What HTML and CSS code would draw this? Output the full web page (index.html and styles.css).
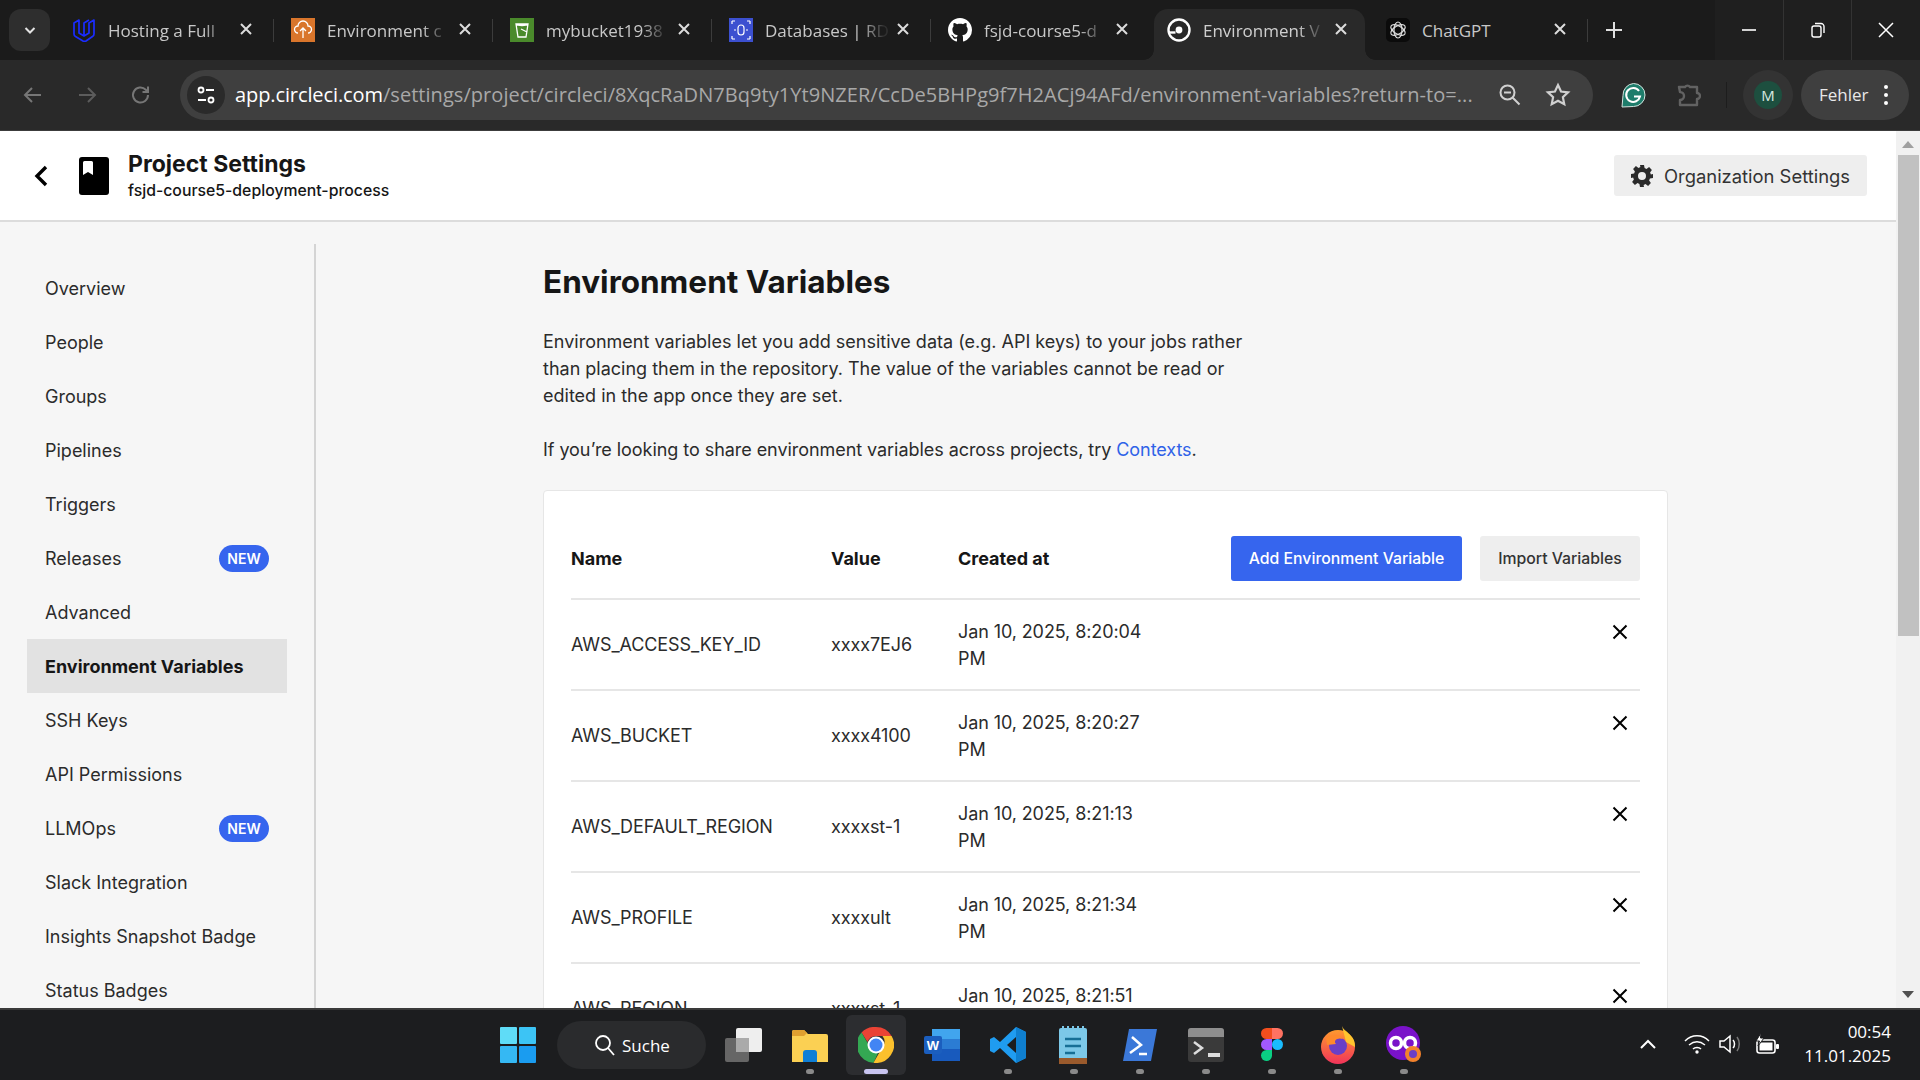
FILE: index.html
```html
<!DOCTYPE html>
<html lang="en">
<head>
    <meta charset="UTF-8">
    <title>Environment Variables</title>
    <link rel="stylesheet" href="styles.css">
</head>
<body>
    <div class="tabstrip">
        <div class="tab-search"><svg width="14" height="14" viewBox="0 0 14 14"><path d="M2.500 5 7 9.500 11.500 5" fill="none" stroke="#e3e3e3" stroke-width="2"/></svg></div>
        <div class="tabs">
            <div class="tab">
                <svg class="favicon" viewBox="0 0 24 24"><path d="M7 2 2 5v11c0 1 .5 2 1.500 2.500L11 23c1 .5 2 .5 3 0l6.500-4.500c1-.5 1.500-1.500 1.500-2.500V2l-5 3v10l-5 3-5-3zM12 18V5l5-3" fill="none" stroke="#1a2cff" stroke-width="1.700" stroke-linejoin="round"/></svg>
                <span class="tab-title">Hosting a Full</span>
                <svg class="tab-close" viewBox="0 0 12 12"><path d="M1 1l10 10M11 1 1 11" stroke="#dcdcdc" stroke-width="2"/></svg>
            </div>
            <div class="tab">
                <svg class="favicon" viewBox="0 0 24 24"><rect width="24" height="24" fill="#d9752b"/><path d="M7 15a3.500 3.500 0 0 1 0-7 5 5 0 0 1 10 0 3.500 3.500 0 0 1 0 7M12 20v-9M9 13l3-3 3 3" fill="none" stroke="#fff" stroke-width="1.300"/></svg>
                <span class="tab-title">Environment c</span>
                <svg class="tab-close" viewBox="0 0 12 12"><path d="M1 1l10 10M11 1 1 11" stroke="#dcdcdc" stroke-width="2"/></svg>
            </div>
            <div class="tab">
                <svg class="favicon" viewBox="0 0 24 24"><rect width="24" height="24" fill="#4a8a2b"/><path d="M6 6h12l-2 13H8zM6 6c2 2 10 2 12 0M11 11l6 3" fill="none" stroke="#fff" stroke-width="1.300"/></svg>
                <span class="tab-title">mybucket1938</span>
                <svg class="tab-close" viewBox="0 0 12 12"><path d="M1 1l10 10M11 1 1 11" stroke="#dcdcdc" stroke-width="2"/></svg>
            </div>
            <div class="tab">
                <svg class="favicon" viewBox="0 0 24 24"><rect width="24" height="24" fill="#3c50d0"/><rect x="9" y="7" width="6" height="10" rx="3" fill="none" stroke="#fff" stroke-width="1.200"/><path d="M3 3h3M3 3v3M21 3h-3M21 3v3M3 21h3M3 21v-3M21 21h-3M21 21v-3M5 12h2M17 12h2" stroke="#fff" stroke-width="1.200"/></svg>
                <span class="tab-title">Databases | RD</span>
                <svg class="tab-close" viewBox="0 0 12 12"><path d="M1 1l10 10M11 1 1 11" stroke="#dcdcdc" stroke-width="2"/></svg>
            </div>
            <div class="tab">
                <svg class="favicon" viewBox="0 0 16 16"><path fill="#fff" d="M8 0C3.580 0 0 3.580 0 8c0 3.540 2.290 6.530 5.470 7.590.4.070.55-.17.55-.38 0-.19-.01-.82-.01-1.490-2.010.37-2.530-.49-2.690-.94-.09-.23-.48-.94-.82-1.130-.28-.15-.68-.52-.01-.53.63-.01 1.080.58 1.230.82.720 1.210 1.870.870 2.330.660.070-.520.280-.870.510-1.070-1.780-.2-3.640-.890-3.640-3.950 0-.870.310-1.590.820-2.150-.080-.2-.360-1.020.080-2.120 0 0 .670-.210 2.200.820.640-.180 1.320-.270 2-.270s1.360.090 2 .270c1.530-1.040 2.200-.820 2.200-.820.440 1.100.160 1.920.080 2.120.510.560.820 1.270.820 2.150 0 3.070-1.870 3.750-3.650 3.950.290.250.540.730.540 1.480 0 1.070-.010 1.930-.010 2.200 0 .210.150.460.550.380A8.010 8.010 0 0 0 16 8c0-4.420-3.580-8-8-8z"/></svg>
                <span class="tab-title">fsjd-course5-d</span>
                <svg class="tab-close" viewBox="0 0 12 12"><path d="M1 1l10 10M11 1 1 11" stroke="#dcdcdc" stroke-width="2"/></svg>
            </div>
            <div class="tab tab-active">
                <svg class="favicon" viewBox="0 0 24 24"><circle cx="12" cy="12" r="10.500" fill="none" stroke="#fff" stroke-width="2.400"/><circle cx="12" cy="12" r="3.400" fill="#fff"/><path d="M1.500 14.500h7" stroke="#fff" stroke-width="2.400"/></svg>
                <span class="tab-title">Environment V</span>
                <svg class="tab-close" viewBox="0 0 12 12"><path d="M1 1l10 10M11 1 1 11" stroke="#dcdcdc" stroke-width="2"/></svg>
            </div>
            <div class="tab tab-last">
                <svg class="favicon" viewBox="0 0 24 24"><rect width="24" height="24" rx="5" fill="#0b0b0b"/><g fill="none" stroke="#ddd" stroke-width="1.200"><ellipse cx="12" cy="12" rx="4" ry="8"/><ellipse cx="12" cy="12" rx="4" ry="8" transform="rotate(60 12 12)"/><ellipse cx="12" cy="12" rx="4" ry="8" transform="rotate(120 12 12)"/></g></svg>
                <span class="tab-title">ChatGPT</span>
                <svg class="tab-close" viewBox="0 0 12 12"><path d="M1 1l10 10M11 1 1 11" stroke="#dcdcdc" stroke-width="2"/></svg>
            </div>
        </div>
        <div class="tab-new"><svg width="18" height="18" viewBox="0 0 18 18"><path d="M9 1v16M1 9h16" stroke="#e0e0e0" stroke-width="2"/></svg></div>
        <div class="window-controls">
            <div class="win-btn"><svg width="14" height="14" viewBox="0 0 14 14"><path d="M0 7h14" stroke="#fff" stroke-width="1.600"/></svg></div>
            <div class="win-btn"><svg width="16" height="16" viewBox="0 0 16 16"><rect x="2" y="4" width="9" height="11" rx="2" fill="none" stroke="#fff" stroke-width="1.400"/><path d="M5 1.500h6a3 3 0 0 1 3 3V11" fill="none" stroke="#fff" stroke-width="1.400"/></svg></div>
            <div class="win-btn"><svg width="16" height="16" viewBox="0 0 16 16"><path d="M1 1l14 14M15 1 1 15" stroke="#fff" stroke-width="1.500"/></svg></div>
        </div>
    </div>

    <div class="toolbar">
        <div class="nav-icons">
            <svg width="24" height="24" viewBox="0 0 24 24"><path d="M20 12H5M11 5l-7 7 7 7" fill="none" stroke="#767676" stroke-width="2"/></svg>
            <svg width="24" height="24" viewBox="0 0 24 24"><path d="M4 12h15M13 5l7 7-7 7" fill="none" stroke="#5c5c5c" stroke-width="2"/></svg>
            <svg width="24" height="24" viewBox="0 0 24 24"><path d="M19 12a7.500 7.500 0 1 1-2.200-5.300L19 9M19 3.500V9h-5.500" fill="none" stroke="#767676" stroke-width="2"/></svg>
        </div>
        <div class="omnibox">
            <div class="site-info"><svg width="22" height="22" viewBox="0 0 22 22"><circle cx="6" cy="6" r="2.500" fill="none" stroke="#fff" stroke-width="1.800"/><path d="M11 6h8M3 16h8" stroke="#fff" stroke-width="1.800"/><circle cx="16" cy="16" r="2.500" fill="none" stroke="#fff" stroke-width="1.800"/></svg></div>
            <div class="url"><span class="url-host">app.circleci.com</span>/settings/project/circleci/8XqcRaDN7Bq9ty1Yt9NZER/CcDe5BHPg9f7H2ACj94AFd/environment-variables?return-to=...</div>
            <svg class="omni-zoom" width="26" height="26" viewBox="0 0 26 26"><circle cx="10.500" cy="10.500" r="7" fill="none" stroke="#d0d0d0" stroke-width="2"/><path d="M7 10.500h7M15.500 15.500l7 7" stroke="#d0d0d0" stroke-width="2"/></svg>
            <svg width="26" height="26" viewBox="0 0 24 24"><path d="m12 2.800 2.800 6 6.500.8-4.800 4.400 1.300 6.500-5.800-3.200-5.800 3.200 1.300-6.500-4.800-4.400 6.500-.8z" fill="none" stroke="#d0d0d0" stroke-width="2"/></svg>
        </div>
        <div class="ext-icons">
            <svg width="26" height="26" viewBox="0 0 26 26"><path d="M13.500 1.500a11.500 11.500 0 1 1 0 23L2 25l1-11.500A11.500 11.500 0 0 1 13.500 1.500z" fill="#1e7d6b" stroke="#d5e5e0" stroke-width="1"/><path d="M19 9a7 7 0 1 0 1 5.500h-6" fill="none" stroke="#fff" stroke-width="2"/></svg>
            <svg width="26" height="26" viewBox="0 0 26 26"><path d="M4 5h6a3 3 0 0 1 5 0h7v6a3 3 0 0 1 0 6v6H5v-5a4 4 0 0 0 0-8z" fill="none" stroke="#626262" stroke-width="2.400" stroke-linejoin="round"/></svg>
        </div>
        <div class="toolbar-sep"></div>
        <div class="avatar-ring"><div class="avatar">M</div></div>
        <div class="error-pill">Fehler<span class="dots"><i></i><i></i><i></i></span></div>
    </div>

    <div class="viewport">
        <div class="page">
            <header class="top">
                <svg class="back" width="16" height="24" viewBox="0 0 16 24"><path d="M13 3 4 12l9 9" fill="none" stroke="#000" stroke-width="3.400"/></svg>
                <svg class="book" width="30" height="38" viewBox="0 0 30 38"><rect width="30" height="38" rx="3" fill="#000"/><path d="M4 5.500a1.500 1.500 0 0 1 1.500-1.500h7a1.500 1.500 0 0 1 1.500 1.500V18l-5-3-5 3z" fill="#fff"/></svg>
                <div class="top-titles">
                    <div class="top-title">Project Settings</div>
                    <div class="top-sub">fsjd-course5-deployment-process</div>
                </div>
                <div class="org-btn">
                    <svg width="24" height="24" viewBox="0 0 24 24"><path fill="#2b2b2b" fill-rule="evenodd" d="M10 1h4l.6 3.100 1.900.8 2.600-1.800 2.800 2.800-1.800 2.600.8 1.900L23 10v4l-3.100.6-.8 1.900 1.800 2.600-2.800 2.800-2.600-1.800-1.900.8L14 23h-4l-.6-3.100-1.900-.8-2.600 1.800-2.800-2.800 1.800-2.600-.8-1.900L1 14v-4l3.100-.6.8-1.900-1.800-2.600 2.800-2.800 2.600 1.800 1.900-.8zM12 8a4 4 0 1 0 0 8 4 4 0 0 0 0-8z"/></svg>
                    Organization Settings
                </div>
            </header>
            <div class="content">
                <nav class="sidebar">
                    <a class="nav-item">Overview</a>
                    <a class="nav-item">People</a>
                    <a class="nav-item">Groups</a>
                    <a class="nav-item">Pipelines</a>
                    <a class="nav-item">Triggers</a>
                    <a class="nav-item">Releases<span class="badge">NEW</span></a>
                    <a class="nav-item">Advanced</a>
                    <a class="nav-item nav-active">Environment Variables</a>
                    <a class="nav-item">SSH Keys</a>
                    <a class="nav-item">API Permissions</a>
                    <a class="nav-item">LLMOps<span class="badge">NEW</span></a>
                    <a class="nav-item">Slack Integration</a>
                    <a class="nav-item">Insights Snapshot Badge</a>
                    <a class="nav-item">Status Badges</a>
                </nav>
                <main class="main">
                    <h1>Environment Variables</h1>
                    <p class="intro">Environment variables let you add sensitive data (e.g. API keys) to your jobs rather than placing them in the repository. The value of the variables cannot be read or edited in the app once they are set.</p>
                    <p class="intro intro-share">If you’re looking to share environment variables across projects, try <a class="link">Contexts</a>.</p>
                    <section class="card">
                        <div class="row row-head">
                            <div>Name</div>
                            <div>Value</div>
                            <div>Created at</div>
                            <div class="actions">
                                <button class="btn btn-primary">Add Environment Variable</button>
                                <button class="btn">Import Variables</button>
                            </div>
                        </div>
                        <div class="row">
                            <div>AWS_ACCESS_KEY_ID</div><div>xxxx7EJ6</div><div>Jan 10, 2025, 8:20:04 PM</div>
                            <svg class="del" width="16" height="16" viewBox="0 0 16 16"><path d="M1.500 1.500l13 13M14.500 1.500l-13 13" stroke="#000" stroke-width="2"/></svg>
                        </div>
                        <div class="row">
                            <div>AWS_BUCKET</div><div>xxxx4100</div><div>Jan 10, 2025, 8:20:27 PM</div>
                            <svg class="del" width="16" height="16" viewBox="0 0 16 16"><path d="M1.500 1.500l13 13M14.500 1.500l-13 13" stroke="#000" stroke-width="2"/></svg>
                        </div>
                        <div class="row">
                            <div>AWS_DEFAULT_REGION</div><div>xxxxst-1</div><div>Jan 10, 2025, 8:21:13 PM</div>
                            <svg class="del" width="16" height="16" viewBox="0 0 16 16"><path d="M1.500 1.500l13 13M14.500 1.500l-13 13" stroke="#000" stroke-width="2"/></svg>
                        </div>
                        <div class="row">
                            <div>AWS_PROFILE</div><div>xxxxult</div><div>Jan 10, 2025, 8:21:34 PM</div>
                            <svg class="del" width="16" height="16" viewBox="0 0 16 16"><path d="M1.500 1.500l13 13M14.500 1.500l-13 13" stroke="#000" stroke-width="2"/></svg>
                        </div>
                        <div class="row">
                            <div>AWS_REGION</div><div>xxxxst-1</div><div>Jan 10, 2025, 8:21:51 PM</div>
                            <svg class="del" width="16" height="16" viewBox="0 0 16 16"><path d="M1.500 1.500l13 13M14.500 1.500l-13 13" stroke="#000" stroke-width="2"/></svg>
                        </div>
                    </section>
                </main>
            </div>
        </div>
        <div class="scrollbar">
            <div class="arrow-up"></div>
            <div class="thumb"></div>
            <div class="arrow-down"></div>
        </div>
    </div>

    <footer class="taskbar">
        <div class="task-center">
            <div class="task-icon">
                <svg width="36" height="36" viewBox="0 0 36 36"><rect width="17" height="17" rx="1" fill="#5fdcf7"/><rect x="19" width="17" height="17" rx="1" fill="#3cc4f5"/><rect y="19" width="17" height="17" rx="1" fill="#35b8f3"/><rect x="19" y="19" width="17" height="17" rx="1" fill="#1a9cf0"/></svg>
            </div>
            <div class="search-pill">
                <svg width="24" height="24" viewBox="0 0 24 24"><circle cx="10" cy="10" r="7" fill="none" stroke="#fff" stroke-width="1.800"/><path d="M15 15l6 7" stroke="#fff" stroke-width="1.800"/></svg>
                Suche
            </div>
            <div class="task-icon">
                <svg width="38" height="34" viewBox="0 0 38 34"><rect y="10" width="24" height="24" rx="2" fill="#666"/><rect x="11" width="26" height="24" rx="2" fill="#eee"/><rect x="11" y="10" width="13" height="14" fill="#aaa"/></svg>
            </div>
            <div class="task-icon running">
                <svg width="36" height="34" viewBox="0 0 36 34"><path d="M0 4a2 2 0 0 1 2-2h10l4 4h18a2 2 0 0 1 2 2v26H0z" fill="#fbd053"/><path d="M0 4a2 2 0 0 1 2-2h10l3 3-3 3H0z" fill="#e0a030"/><path d="M11 34V25a3 3 0 0 1 3-3h8a3 3 0 0 1 3 3v9z" fill="#0f7fd6"/></svg>
            </div>
            <div class="task-icon task-active">
                <svg width="36" height="36" viewBox="0 0 36 36"><path d="M18 0a18 18 0 0 1 15.600 9H18a9 9 0 0 0-8.500 6L3.500 5.500A18 18 0 0 1 18 0z" fill="#ea4335"/><path d="M3.500 5.500 12 20a7 7 0 0 0 8 6l-4.500 9.800A18 18 0 0 1 3.500 5.500z" fill="#34a853"/><path d="M33.600 9A18 18 0 0 1 15.500 35.800L24.500 20a9 9 0 0 0 0-11z" fill="#fbc02d"/><circle cx="18" cy="18" r="8.500" fill="#fff"/><circle cx="18" cy="18" r="6.500" fill="#4285f4"/></svg>
            </div>
            <div class="task-icon">
                <svg width="36" height="36" viewBox="0 0 36 36"><rect x="8" y="2" width="28" height="32" rx="2" fill="#2b7cd3"/><rect x="8" y="2" width="28" height="10" fill="#41a5ee"/><rect x="8" y="22" width="28" height="12" fill="#185abd"/><rect y="9" width="18" height="18" rx="2" fill="#1b5ebe"/><text class="word-w" x="9" y="23" text-anchor="middle">W</text></svg>
            </div>
            <div class="task-icon running">
                <svg width="36" height="36" viewBox="0 0 36 36"><path d="M26 0 36 5v26l-10 5L10 21l-6 5-4-2V12l4-2 6 5zM26 10l-9 8 9 8z" fill="#1f9cf0" fill-rule="evenodd"/><path d="M26 0 36 5v26l-10 5z" fill="#0f7fcf"/></svg>
            </div>
            <div class="task-icon running">
                <svg width="30" height="38" viewBox="0 0 30 38"><rect y="2" width="28" height="36" rx="2" fill="#7cc8e8"/><rect y="32" width="28" height="6" fill="#9a5a2c"/><path d="M6 13h16M6 20h16M6 27h10" stroke="#176f96" stroke-width="2.500"/><path d="M4 0v4M9 0v4M14 0v4M19 0v4M24 0v4" stroke="#7cc8e8" stroke-width="2"/></svg>
            </div>
            <div class="task-icon running">
                <svg width="36" height="34" viewBox="0 0 36 34"><path d="M7 1h28l-6 32H1z" fill="#3b78d8"/><path d="m10 9 9 8-11 8" fill="none" stroke="#fff" stroke-width="2.500"/><path d="M17 26h8" stroke="#fff" stroke-width="2.500"/></svg>
            </div>
            <div class="task-icon running">
                <svg width="36" height="36" viewBox="0 0 36 36"><rect y="1" width="36" height="34" rx="3" fill="#3a3a3a"/><path d="M0 4a3 3 0 0 1 3-3h30a3 3 0 0 1 3 3v6H0z" fill="#8e8e8e"/><path d="m6 15 8 6-8 6" fill="none" stroke="#ddd" stroke-width="2.500"/><rect x="20" y="26" width="12" height="4" fill="#ddd"/></svg>
            </div>
            <div class="task-icon running">
                <svg width="22" height="36" viewBox="0 0 22 36"><path d="M5.500 1H11v11H5.500a5.500 5.500 0 0 1 0-11z" fill="#f24e1e"/><path d="M11 1h5.500a5.500 5.500 0 0 1 0 11H11z" fill="#ff7262"/><path d="M5.500 12H11v11H5.500a5.500 5.500 0 0 1 0-11z" fill="#a259ff"/><circle cx="16.500" cy="17.500" r="5.500" fill="#1abcfe"/><path d="M5.500 23H11v6a5.500 5.500 0 1 1-5.500-6z" fill="#0acf83"/></svg>
            </div>
            <div class="task-icon running">
                <svg width="36" height="38" viewBox="0 0 36 38"><defs><linearGradient id="fx" x1="0" y1="0" x2="0" y2="1"><stop offset="0" stop-color="#ff9a2e"/><stop offset="1" stop-color="#f0335a"/></linearGradient></defs><circle cx="18" cy="21" r="17" fill="url(#fx)"/><path d="M22 0c2 6 14 9 13 21l-9-5z" fill="#ffc52e"/><circle cx="18" cy="20" r="9" fill="#6a3fc6"/><path d="M6 12c4-4 13-5 17 1-6-2-10 2-7 5l-9 1z" fill="#ff8a2c"/></svg>
            </div>
            <div class="task-icon running">
                <svg width="36" height="38" viewBox="0 0 36 38"><circle cx="17" cy="17" r="17" fill="#7a12c9"/><circle cx="10" cy="17" r="5.500" fill="none" stroke="#fff" stroke-width="3.500"/><circle cx="24" cy="17" r="5.500" fill="none" stroke="#fff" stroke-width="3.500"/><circle cx="27" cy="28" r="8" fill="#f2822c"/><circle cx="27" cy="28" r="4" fill="#6a3fc6"/></svg>
            </div>
        </div>
        <div class="tray">
            <svg class="tray-chevron" width="20" height="12" viewBox="0 0 20 12"><path d="M3 10l7-7 7 7" fill="none" stroke="#fff" stroke-width="2"/></svg>
            <svg class="tray-wifi" width="26" height="20" viewBox="0 0 26 20"><path d="M1 7c7-7 17-7 24 0M5 11c5-4 11-4 16 0M9 15c2-2 6-2 8 0" fill="none" stroke="#fff" stroke-width="1.500"/><circle cx="13" cy="18" r="1.700" fill="#fff"/></svg>
            <svg class="tray-vol" width="24" height="22" viewBox="0 0 24 22"><path d="M1 8h4l6-5v16l-6-5H1zM14 7c2 2 2 6 0 8" fill="none" stroke="#fff" stroke-width="1.500"/><path d="M18 4c3 4 3 10 0 14" fill="none" stroke="#777" stroke-width="1.500"/></svg>
            <svg class="tray-bat" width="26" height="22" viewBox="0 0 26 22"><rect x="3" y="7" width="18" height="13" rx="2.500" fill="none" stroke="#fff" stroke-width="1.600"/><rect x="5.500" y="9.500" width="13" height="8" fill="#fff"/><rect x="22" y="11" width="3" height="5" rx="1" fill="#fff"/><path d="M7 0 2 8h3.500l-1.500 5 6-8H6.500z" fill="#fff" stroke="#1c1d1f"/></svg>
            <div class="clock"><div>00:54</div><div>11.01.2025</div></div>
        </div>
    </footer>
</body>
</html>
```

FILE: styles.css
```css
* {
    box-sizing: border-box;
    margin: 0;
    padding: 0;
}
body {
    width: 1920px;
    height: 1080px;
    display: flex;
    flex-direction: column;
    overflow: hidden;
    font-family: "Inter", "Liberation Sans", sans-serif;
    background: #1c1c1c;
}

/* browser chrome */
.tabstrip {
    height: 60px;
    display: flex;
    background: #1b1b1b;
    font-family: "Open Sans", "Noto Sans", sans-serif;
    color: #c8c8c8;
}
.tab-search {
    width: 41px;
    height: 42px;
    margin: 9px 0 0 9px;
    border-radius: 12px;
    background: #2e2e2e;
    display: flex;
    align-items: center;
    justify-content: center;
}
.tabs {
    display: flex;
    margin-left: 5px;
    padding-top: 9px;
}
.tab {
    width: 219px;
    height: 51px;
    padding: 0 22px 9px 17px;
    display: flex;
    align-items: center;
    position: relative;
}
.tab::after {
    content: "";
    position: absolute;
    right: 0;
    top: 10px;
    height: 23px;
    width: 1px;
    background: #3c3c3c;
}
.tab:nth-child(5)::after {
    display: none;
}
.tab-active {
    width: 211px;
    margin: 0 4px;
    padding: 0 18px 9px 13px;
    background: #292929;
    border-radius: 14px 14px 0 0;
    color: #cfcfcf;
}
.tab-active::before,
.tab-active::after {
    content: "";
    position: absolute;
    top: auto;
    bottom: 0;
    width: 10px;
    height: 10px;
    background: radial-gradient(circle at 0 0, transparent 9.500px, #292929 10px);
}
.tab-active::before {
    left: -10px;
}
.tab-active::after {
    right: -10px;
    background: radial-gradient(circle at 100% 0, transparent 9.500px, #292929 10px);
}
.favicon {
    width: 24px;
    height: 24px;
    flex: none;
}
.tab-title {
    flex: 1;
    min-width: 0;
    margin-left: 12px;
    font-size: 17px;
    white-space: nowrap;
    -webkit-mask-image: linear-gradient(to right, #000 72%, rgba(0, 0, 0, 0.12) 90%);
    mask-image: linear-gradient(to right, #000 72%, rgba(0, 0, 0, 0.12) 90%);
}
.tab-last .tab-title {
    -webkit-mask-image: none;
    mask-image: none;
}
.tab-close {
    width: 12px;
    height: 12px;
    flex: none;
    margin-bottom: 3px;
}
.tab-new {
    margin-left: 17px;
    padding-top: 21px;
}
.window-controls {
    margin-left: auto;
    width: 205px;
    display: flex;
    background: #1f1f1f;
}
.win-btn {
    flex: 1;
    display: flex;
    align-items: center;
    justify-content: center;
    border-left: 1px solid #333;
}
.win-btn:first-child {
    border-left: 0;
}

.toolbar {
    height: 71px;
    display: flex;
    align-items: center;
    background: #292929;
    border-bottom: 1px solid #3c3c3c;
    font-family: "Open Sans", "Noto Sans", sans-serif;
}
.nav-icons {
    width: 180px;
    padding-left: 21px;
    display: flex;
    gap: 30px;
}
.omnibox {
    width: 1413px;
    height: 50px;
    padding: 0 22px 0 7px;
    border-radius: 25px;
    background: #3f3f3f;
    display: flex;
    align-items: center;
}
.site-info {
    width: 38px;
    height: 38px;
    border-radius: 50%;
    background: #2a2a2a;
    display: flex;
    align-items: center;
    justify-content: center;
    flex: none;
}
.url {
    width: 1240px;
    margin: 0 0 2px 10px;
    font-size: 20px;
    letter-spacing: 0.050px;
    color: #a8a8a8;
    white-space: nowrap;
    overflow: hidden;
}
.url-host {
    color: #fff;
    letter-spacing: -0.100px;
}
.omni-zoom {
    margin: 0 22px 0 23px;
    flex: none;
}
.ext-icons {
    display: flex;
    gap: 29px;
    margin-left: 27px;
}
.toolbar-sep {
    width: 1px;
    height: 26px;
    margin-left: 25px;
    background: #1d1d1d;
}
.avatar-ring {
    width: 50px;
    height: 50px;
    margin-left: 16px;
    border-radius: 50%;
    background: #333;
    display: flex;
    align-items: center;
    justify-content: center;
}
.avatar {
    width: 28px;
    height: 28px;
    border-radius: 50%;
    background: #1d4f3f;
    color: #d8e8e0;
    font-size: 15px;
    line-height: 28px;
    text-align: center;
}
.error-pill {
    width: 108px;
    height: 50px;
    margin-left: 8px;
    padding: 0 0 2px 18px;
    border-radius: 25px;
    background: #3f3f3f;
    color: #e8e8e8;
    font-size: 17px;
    display: flex;
    align-items: center;
}
.dots {
    margin: 2px 0 0 15px;
    display: flex;
    flex-direction: column;
    gap: 4px;
}
.dots i {
    width: 4px;
    height: 4px;
    border-radius: 50%;
    background: #fff;
}

/* page */
.viewport {
    height: 879px;
    display: flex;
    overflow: hidden;
    border-bottom: 2px solid #3a3a3a;
}
.page {
    width: 1896px;
    background: #f6f6f6;
    overflow: hidden;
    color: #161616;
}
.top {
    height: 91px;
    padding: 0 29px 0 33px;
    background: #fff;
    border-bottom: 2px solid #dcdcdc;
    display: flex;
    align-items: center;
}
.book {
    margin-left: 30px;
}
.top-titles {
    margin-left: 19px;
}
.top-title {
    font-size: 23px;
    line-height: 30px;
    font-weight: 700;
}
.top-sub {
    margin-top: 1px;
    font-size: 15.800px;
    line-height: 22px;
    font-weight: 500;
}
.org-btn {
    margin-left: auto;
    width: 253px;
    height: 41px;
    padding-left: 16px;
    border-radius: 3px;
    background: #eeeeee;
    color: #333;
    font-size: 18.400px;
    display: flex;
    align-items: center;
    gap: 10px;
}
.content {
    display: flex;
    align-items: flex-start;
}
.sidebar {
    width: 316px;
    margin-top: 22px;
    padding: 17px 27px 0;
    border-right: 2px solid #d4d4d4;
    flex: none;
}
.nav-item {
    height: 54px;
    padding: 0 18px;
    display: flex;
    align-items: center;
    justify-content: space-between;
    font-size: 18px;
    color: #2b2b2b;
}
.nav-active {
    background: #e2e2e2;
    font-weight: 700;
    color: #161616;
}
.badge {
    width: 50px;
    height: 27px;
    border-radius: 14px;
    background: #3665ee;
    color: #fff;
    font-size: 14px;
    font-weight: 600;
    line-height: 27px;
    text-align: center;
}
.main {
    width: 1125px;
    margin-left: 227px;
    padding-top: 38px;
}
h1 {
    font-size: 31.500px;
    line-height: 44px;
    font-weight: 700;
    margin-bottom: 24px;
}
.intro {
    width: 720px;
    margin-bottom: 27px;
    font-size: 18px;
    line-height: 27px;
    color: #2b2b2b;
}
.intro-share {
    letter-spacing: -0.055px;
}
.link {
    color: #2f62e8;
}
.card {
    margin-top: 27px;
    padding: 27px 27px 0;
    background: #fff;
    border: 1px solid #e6e6e6;
    border-radius: 4px;
}
.row {
    height: 91px;
    display: grid;
    grid-template-columns: 260px 127px 190px 1fr;
    align-items: center;
    border-bottom: 2px solid #e6e6e6;
    font-size: 18px;
    letter-spacing: -0.100px;
    line-height: 27px;
    color: #2b2b2b;
}
.row-head {
    height: 82px;
    font-weight: 700;
    color: #161616;
    letter-spacing: 0;
}
.actions {
    display: flex;
    justify-content: flex-end;
    gap: 18px;
}
.btn {
    height: 45px;
    width: 160px;
    border: 0;
    border-radius: 3px;
    background: #eeeeee;
    color: #333;
    font-family: inherit;
    font-size: 15.800px;
    font-weight: 500;
}
.btn-primary {
    width: 231px;
    background: #3665ee;
    color: #fff;
}
.del {
    justify-self: end;
    align-self: start;
    margin: 24px 12px 0 0;
}

/* scrollbar */
.scrollbar {
    width: 24px;
    background: #f1f1f1;
    display: flex;
    flex-direction: column;
    align-items: center;
    padding-top: 10px;
}
.arrow-up {
    border: 6px solid transparent;
    border-top: 0;
    border-bottom: 7px solid #a0a0a0;
}
.arrow-down {
    margin-top: auto;
    margin-bottom: 10px;
    border: 6px solid transparent;
    border-bottom: 0;
    border-top: 7px solid #505050;
}
.thumb {
    width: 21px;
    height: 481px;
    margin-top: 7px;
    background: #c1c1c1;
}

/* taskbar */
.taskbar {
    flex: 1;
    position: relative;
    background: #1c1d1f;
    color: #fff;
    font-family: "Open Sans", "Noto Sans", sans-serif;
}
.task-center {
    display: flex;
    align-items: center;
    height: 70px;
    padding-left: 485px;
}
.task-icon {
    width: 66px;
    height: 60px;
    display: flex;
    align-items: center;
    justify-content: center;
    position: relative;
    flex: none;
}
.task-icon.running::after,
.task-active::after {
    content: "";
    position: absolute;
    left: 29px;
    bottom: 1px;
    width: 8px;
    height: 5px;
    border-radius: 3px;
    background: #8a8a8a;
}
.task-active {
    background: #2c2d30;
    border-radius: 6px;
    width: 60px;
    margin: 0 3px;
}
.task-active::after {
    left: 18px;
    width: 24px;
    background: #c8c4f0;
}
.search-pill {
    width: 149px;
    height: 48px;
    margin: 0 5px 0 6px;
    padding-left: 36px;
    border-radius: 24px;
    background: #2a2b2d;
    font-size: 17px;
    display: flex;
    align-items: center;
    gap: 5px;
    flex: none;
}
.word-w {
    font-family: "Liberation Sans", sans-serif;
    font-size: 13px;
    font-weight: 700;
    fill: #fff;
}
.tray {
    position: absolute;
    top: 0;
    right: 29px;
    height: 68px;
    display: flex;
    align-items: center;
}
.tray-wifi {
    margin-left: 26px;
}
.tray-vol {
    margin-left: 9px;
}
.tray-bat {
    margin-left: 11px;
}
.clock {
    margin-left: 24px;
    text-align: right;
    font-size: 17px;
    line-height: 24px;
}
```
